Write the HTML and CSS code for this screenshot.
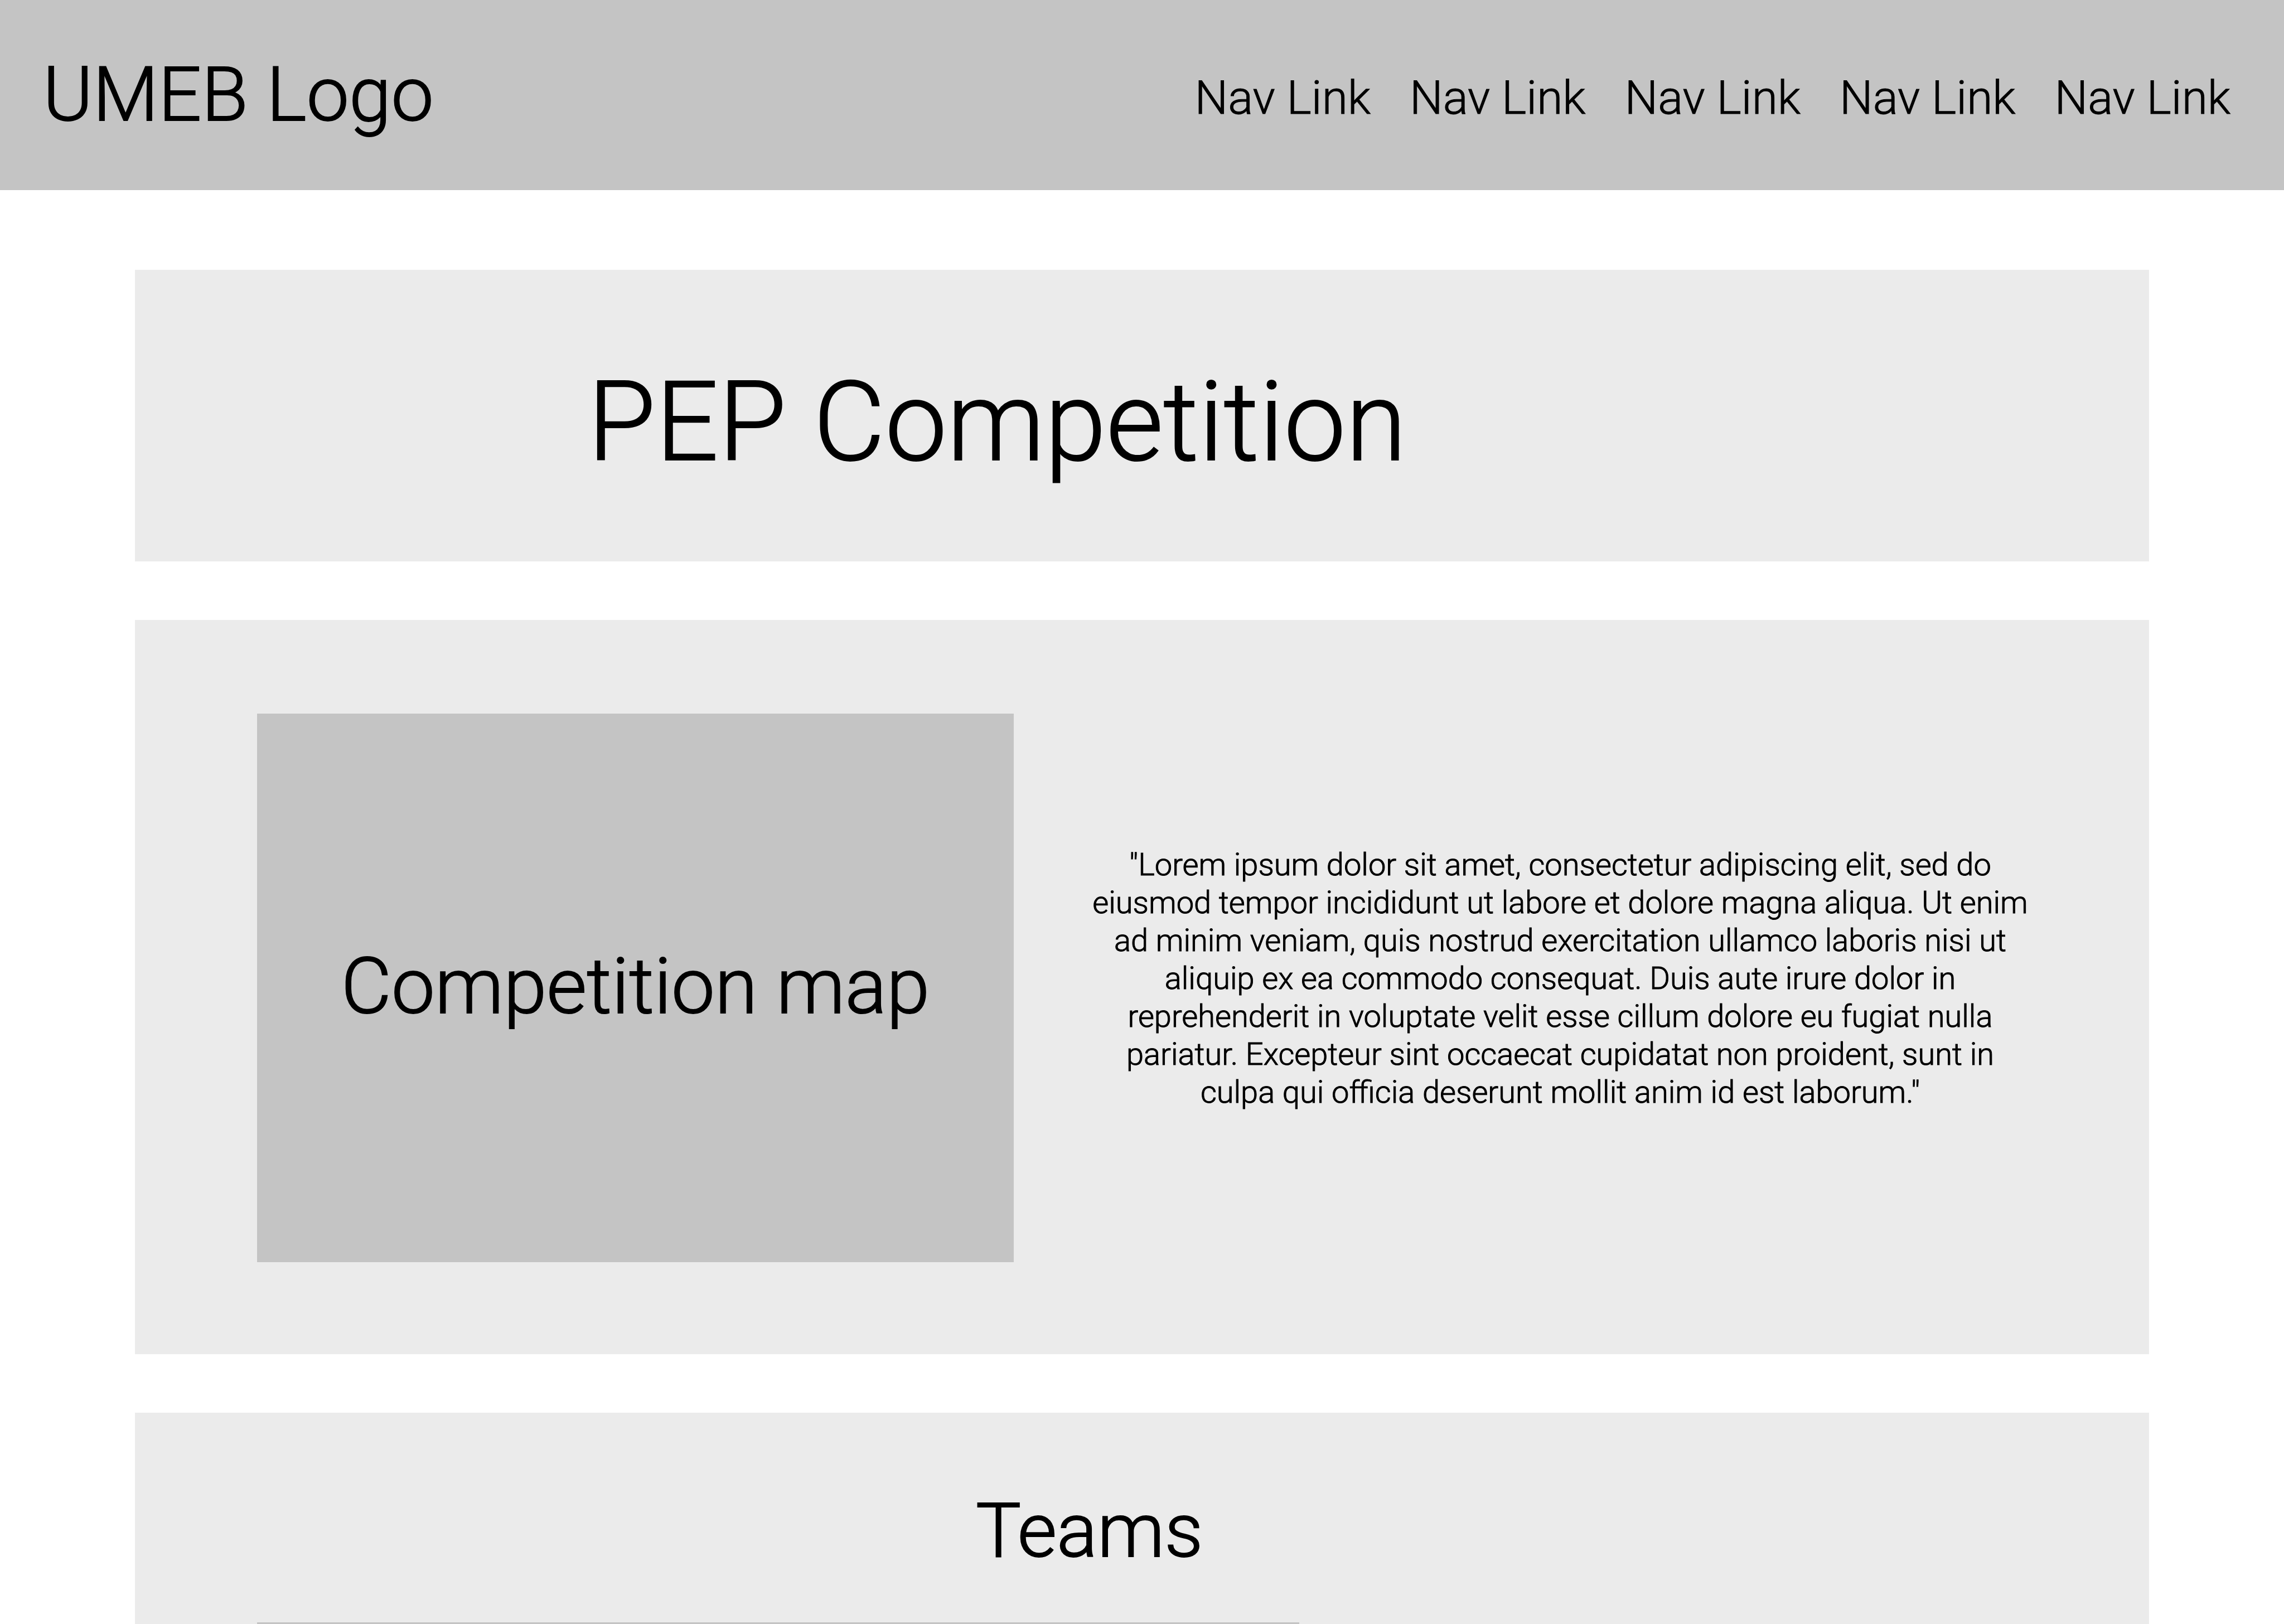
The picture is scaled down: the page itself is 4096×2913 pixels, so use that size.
FILE: index.html
```html
<!DOCTYPE html>
<html lang="en">
<head>
  <meta charset="utf-8">
  <meta name="viewport" content="width=device-width, initial-scale=1">
  <title>PEP Competition</title>
  <link rel="stylesheet" href="styles.css">
</head>
<body>
  <header class="site-header">
    <a class="logo" href="#">UMEB Logo</a>
    <nav class="site-nav" aria-label="Main">
      <a class="nav-link" href="#">Nav Link</a>
      <a class="nav-link" href="#">Nav Link</a>
      <a class="nav-link" href="#">Nav Link</a>
      <a class="nav-link" href="#">Nav Link</a>
      <a class="nav-link" href="#">Nav Link</a>
    </nav>
  </header>
  <main class="content">
    <section class="card hero">
      <h1 class="hero-title">PEP Competition</h1>
    </section>
    <section class="card overview">
      <div class="map">Competition map</div>
      <p class="description">"Lorem ipsum dolor sit amet, consectetur adipiscing elit, sed do<br>
        eiusmod tempor incididunt ut labore et dolore magna aliqua. Ut enim<br>
        ad minim veniam, quis nostrud exercitation ullamco laboris nisi ut<br>
        aliquip ex ea commodo consequat. Duis aute irure dolor in<br>
        reprehenderit in voluptate velit esse cillum dolore eu fugiat nulla<br>
        pariatur. Excepteur sint occaecat cupidatat non proident, sunt in<br>
        culpa qui officia deserunt mollit anim id est laborum."</p>
    </section>
    <section class="card teams">
      <h2 class="teams-title">Teams</h2>
      <div class="team-panel"></div>
    </section>
  </main>
</body>
</html>
```
FILE: styles.css
```css
* {
  box-sizing: border-box;
}

body {
  display: flex;
  flex-direction: column;
  min-height: 100vh;
  margin: 0;
  background: #ffffff;
  color: #000000;
  font-family: Roboto, "Liberation Sans", sans-serif;
  font-weight: 300;
  -webkit-text-stroke: 1px #000000;
}

h1,
h2,
p {
  margin: 0;
  font-weight: inherit;
}

a {
  color: inherit;
  text-decoration: none;
}

/* Display text carries a slightly heavier outline than body text */
.logo,
.hero-title,
.map,
.teams-title {
  -webkit-text-stroke-width: 2px;
}

/* Header */
.site-header {
  display: flex;
  align-items: center;
  justify-content: space-between;
  padding: 85px 96px 86px 77px;
  background: #c4c4c4;
}

.logo {
  font-size: 136px;
  line-height: 170px;
}

.site-nav {
  display: flex;
  gap: 70px;
  padding-top: 11px;
}

.nav-link {
  font-size: 84px;
  line-height: 100px;
}

/* Stacked cards */
.content {
  display: flex;
  flex: 1;
  flex-direction: column;
  gap: 105px;
  padding: 143px 242px 0;
}

.card {
  background: #ebebeb;
}

.hero {
  padding: 153px 0 130px 812px;
}

.hero-title {
  font-size: 198px;
  line-height: 240px;
}

.overview {
  display: flex;
  gap: 136px;
  padding: 168px 212px 165px 219px;
}

.map {
  display: flex;
  flex: 0 0 1357px;
  align-items: center;
  justify-content: center;
  min-height: 984px;
  padding-bottom: 4px;
  background: #c4c4c4;
  font-size: 139px;
  line-height: 170px;
}

.description {
  flex: 1;
  align-self: center;
  padding-bottom: 34px;
  font-size: 56px;
  line-height: 68px;
  text-align: center;
}

.teams {
  display: flex;
  flex: 1;
  flex-direction: column;
  padding: 127px 219px 0;
}

.teams-title {
  margin: 0 0 79px 1289px;
  font-size: 136px;
  line-height: 170px;
}

.team-panel {
  flex: 1;
  width: 1869px;
  background: #c4c4c4;
}
```
